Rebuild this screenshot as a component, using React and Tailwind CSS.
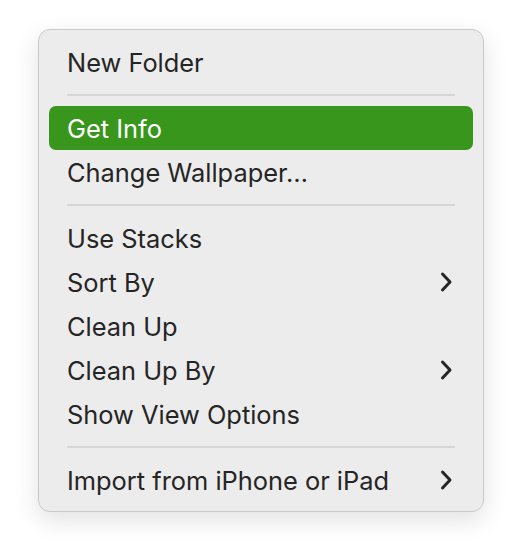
import React from "react";

const Chevron = () => (
  <svg width="14" height="22" viewBox="0 0 14 22" className="shrink-0">
    <path d="M3.5 3 L11 11 L3.5 19" fill="none" stroke="#262626" strokeWidth="3" strokeLinecap="round" strokeLinejoin="round" />
  </svg>
);

const Item = ({ label, active, sub }) => (
  <div
    className={`h-[44px] mx-[10px] rounded-[7px] flex items-center justify-between pl-[18px] pr-[20px] ${
      active ? "bg-[#37961b] text-white" : "text-[#252525]"
    }`}
  >
    <span className="pt-[2px]">{label}</span>
    {sub && <Chevron />}
  </div>
);

const Sep = () => (
  <div className="h-[22px] flex items-center px-[28px]">
    <div className="h-[2px] w-full bg-[#d6d6d6]" />
  </div>
);

export default function App() {
  return (
    <div className="w-[522px] h-[558px] bg-white pt-[29px] pl-[38px]">
      <div
        className="w-[446px] h-[483px] bg-[#ececec] border border-[#c9c9c9] rounded-[12px] pt-[10px] pb-[9px] shadow-[0_8px_24px_rgba(0,0,0,0.12)] text-[25.4px] leading-none"
        style={{ fontFamily: "Inter, 'Liberation Sans', sans-serif" }}
      >
        <Item label="New Folder" />
        <Sep />
        <Item label="Get Info" active />
        <Item label="Change Wallpaper…" />
        <Sep />
        <Item label="Use Stacks" />
        <Item label="Sort By" sub />
        <Item label="Clean Up" />
        <Item label="Clean Up By" sub />
        <Item label="Show View Options" />
        <Sep />
        <Item label="Import from iPhone or iPad" sub />
      </div>
    </div>
  );
}
